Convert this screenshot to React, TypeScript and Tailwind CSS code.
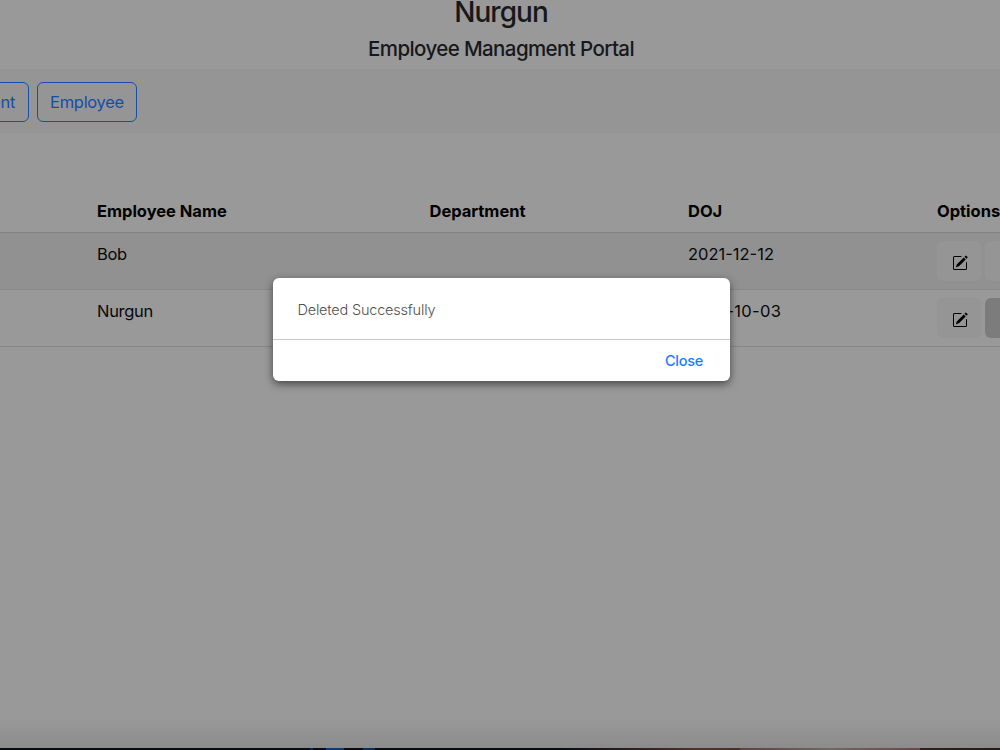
import React from "react";
import { BsPencilSquare } from "react-icons/bs";

type Employee = { name: string; department: string; doj: string; deleteActive: boolean };

const employees: Employee[] = [
  { name: "Bob", department: "", doj: "2021-12-12", deleteActive: false },
  { name: "Nurgun", department: "", doj: "2021-10-03", deleteActive: true },
];

const columns = "grid grid-cols-[332.5px_258.5px_249px_63px] pl-[97px]";

function Header() {
  return (
    <header className="flex h-[69px] flex-col items-center pl-[2px] font-[550] text-[#16181b]">
      <h1 className="text-[28px] leading-[24px] tracking-[-0.95px]">Nurgun</h1>
      <h2 className="mt-[12px] text-[20.5px] leading-[25px] tracking-[-0.6px]">Employee Managment Portal</h2>
    </header>
  );
}

function Nav() {
  const button =
    "h-[40px] shrink-0 rounded-[6px] border border-[#174fa8] text-[16.5px] leading-[38px] tracking-[-0.3px] text-[#154da6]";
  return (
    <nav className="flex h-[64px] items-center gap-[8px] overflow-hidden bg-[#959595] pt-px">
      <button className={`${button} -ml-[100px] w-[129px] pr-[13px] text-right`}>Department</button>
      <button className={`${button} w-[100px]`}>Employee</button>
    </nav>
  );
}

function Row({ employee, striped }: { employee: Employee; striped: boolean }) {
  return (
    <div
      className={`${columns} h-[57px] border-b border-[#858889] pt-[8px] text-[16.5px] leading-[25px] text-[#080809] ${
        striped ? "bg-[#919191]" : ""
      }`}
    >
      <span className="pt-px tracking-[-0.3px]">{employee.name}</span>
      <span className="pt-px">{employee.department}</span>
      <span className={`pt-px ${striped ? "" : "tracking-[0.3px]"}`}>{employee.doj}</span>
      <div className="flex gap-[4px]">
        <button
          aria-label="Edit"
          className="flex h-[40px] w-[44px] shrink-0 items-center justify-center rounded-[6px] bg-[#959595] pt-[4px] pl-px text-black"
        >
          <BsPencilSquare size={16} />
        </button>
        <button
          aria-label="Delete"
          className={`h-[40px] w-[44px] shrink-0 rounded-[6px] ${
            employee.deleteActive ? "bg-[#7c7c7c]" : "bg-[#959595]"
          }`}
        />
      </div>
    </div>
  );
}

export default function App() {
  return (
    <div className="relative flex h-[750px] w-[1000px] flex-col overflow-hidden bg-[#999999] font-['Inter',sans-serif]">
      <Header />
      <Nav />
      <main className="flex-1">
        <div
          className={`${columns} h-[100px] border-b border-[#838383] pt-[66px] text-[16.5px] leading-[25px] font-bold tracking-[-0.02px] text-black`}
        >
          <span>Employee Name</span>
          <span>Department</span>
          <span>DOJ</span>
          <span>Options</span>
        </div>
        {employees.map((employee, i) => (
          <Row key={employee.name} employee={employee} striped={i % 2 === 0} />
        ))}
      </main>
      <div className="h-[30px] bg-linear-to-b from-[#999999] to-[#8c8c8c]" />
      <footer className="flex h-[2px] bg-linear-to-r from-[#090c13] from-56% via-[#51332b] via-70% to-[#24191b]">
        <span className="ml-[310px] h-[2px] w-[3px] bg-[#092a50]" />
        <span className="ml-[13px] h-[2px] w-[18px] bg-[#083d78]" />
        <span className="ml-[19px] h-[2px] w-[12px] bg-[#092f59]" />
        <span className="ml-[365px] h-[2px] w-[180px] bg-linear-to-r from-[#5a433f] via-[#706568] to-[#66474a]" />
      </footer>
      <div
        role="dialog"
        className="absolute top-[278px] left-[273px] flex h-[103px] w-[457px] flex-col rounded-[6px] bg-white shadow-[0_3px_8px_rgba(0,0,0,0.55)]"
      >
        <p className="h-[62px] border-b border-[#c9c9c9] pt-[21px] pl-[24.5px] text-[14.5px] leading-[22px] font-[350] tracking-[-0.2px] text-[#505050]">
          Deleted Successfully
        </p>
        <button className="mr-[27px] flex-1 self-end text-[14.5px] font-medium tracking-[-0.25px] text-[#147efb]">
          Close
        </button>
      </div>
    </div>
  );
}
